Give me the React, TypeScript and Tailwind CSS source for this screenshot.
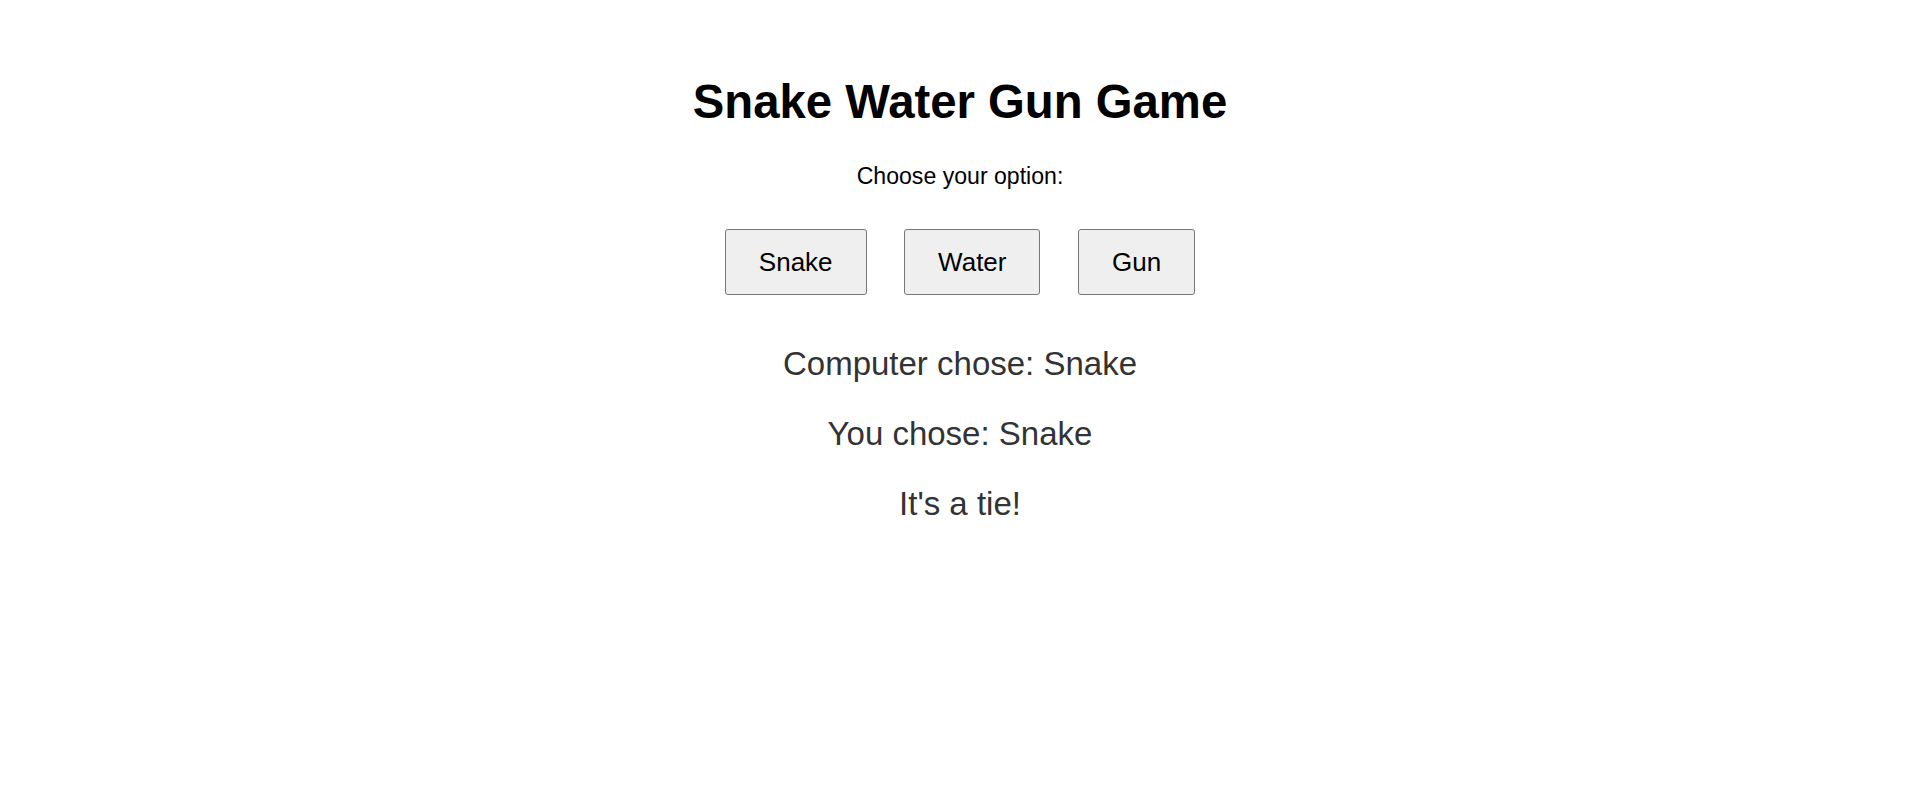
import { useState } from 'react';

type Choice = 'Snake' | 'Water' | 'Gun';

const choices: Choice[] = ['Snake', 'Water', 'Gun'];

// snake drinks water, water drowns gun, gun shoots snake
const beats: Record<Choice, Choice> = {
  Snake: 'Water',
  Water: 'Gun',
  Gun: 'Snake',
};

function outcome(player: Choice, computer: Choice) {
  if (player === computer) return "It's a tie!";
  return beats[player] === computer ? 'You win!' : 'You lose!';
}

export default function App() {
  const [player, setPlayer] = useState<Choice>('Snake');
  const [computer, setComputer] = useState<Choice>('Snake');

  const play = (choice: Choice) => {
    setPlayer(choice);
    setComputer(choices[Math.floor(Math.random() * choices.length)]);
  };

  return (
    <div className="min-h-[799px] w-full bg-white font-['Liberation_Sans',Arial,sans-serif] text-center">
      <div className="flex flex-col items-center pt-[75px]">
        <h1 className="text-[47.3px] font-bold leading-[54px] text-black">Snake Water Gun Game</h1>
        <p className="mt-[34px] text-[23.1px] leading-[27px] text-black">Choose your option:</p>
        <div className="mt-[39px] flex items-center gap-[37.5px]">
          {choices.map((choice) => (
            <button
              key={choice}
              onClick={() => play(choice)}
              className="flex h-[66px] items-center rounded-[3px] border border-[#767676] bg-[#efefef] px-[33px] text-[26px] leading-none text-black hover:bg-[#e5e5e5]"
            >
              {choice}
            </button>
          ))}
        </div>
        <div className="mt-[50px] flex flex-col items-center gap-8 text-[33px] leading-[38px] text-[#333333]">
          <p>Computer chose: {computer}</p>
          <p>You chose: {player}</p>
          <p>{outcome(player, computer)}</p>
        </div>
      </div>
    </div>
  );
}
